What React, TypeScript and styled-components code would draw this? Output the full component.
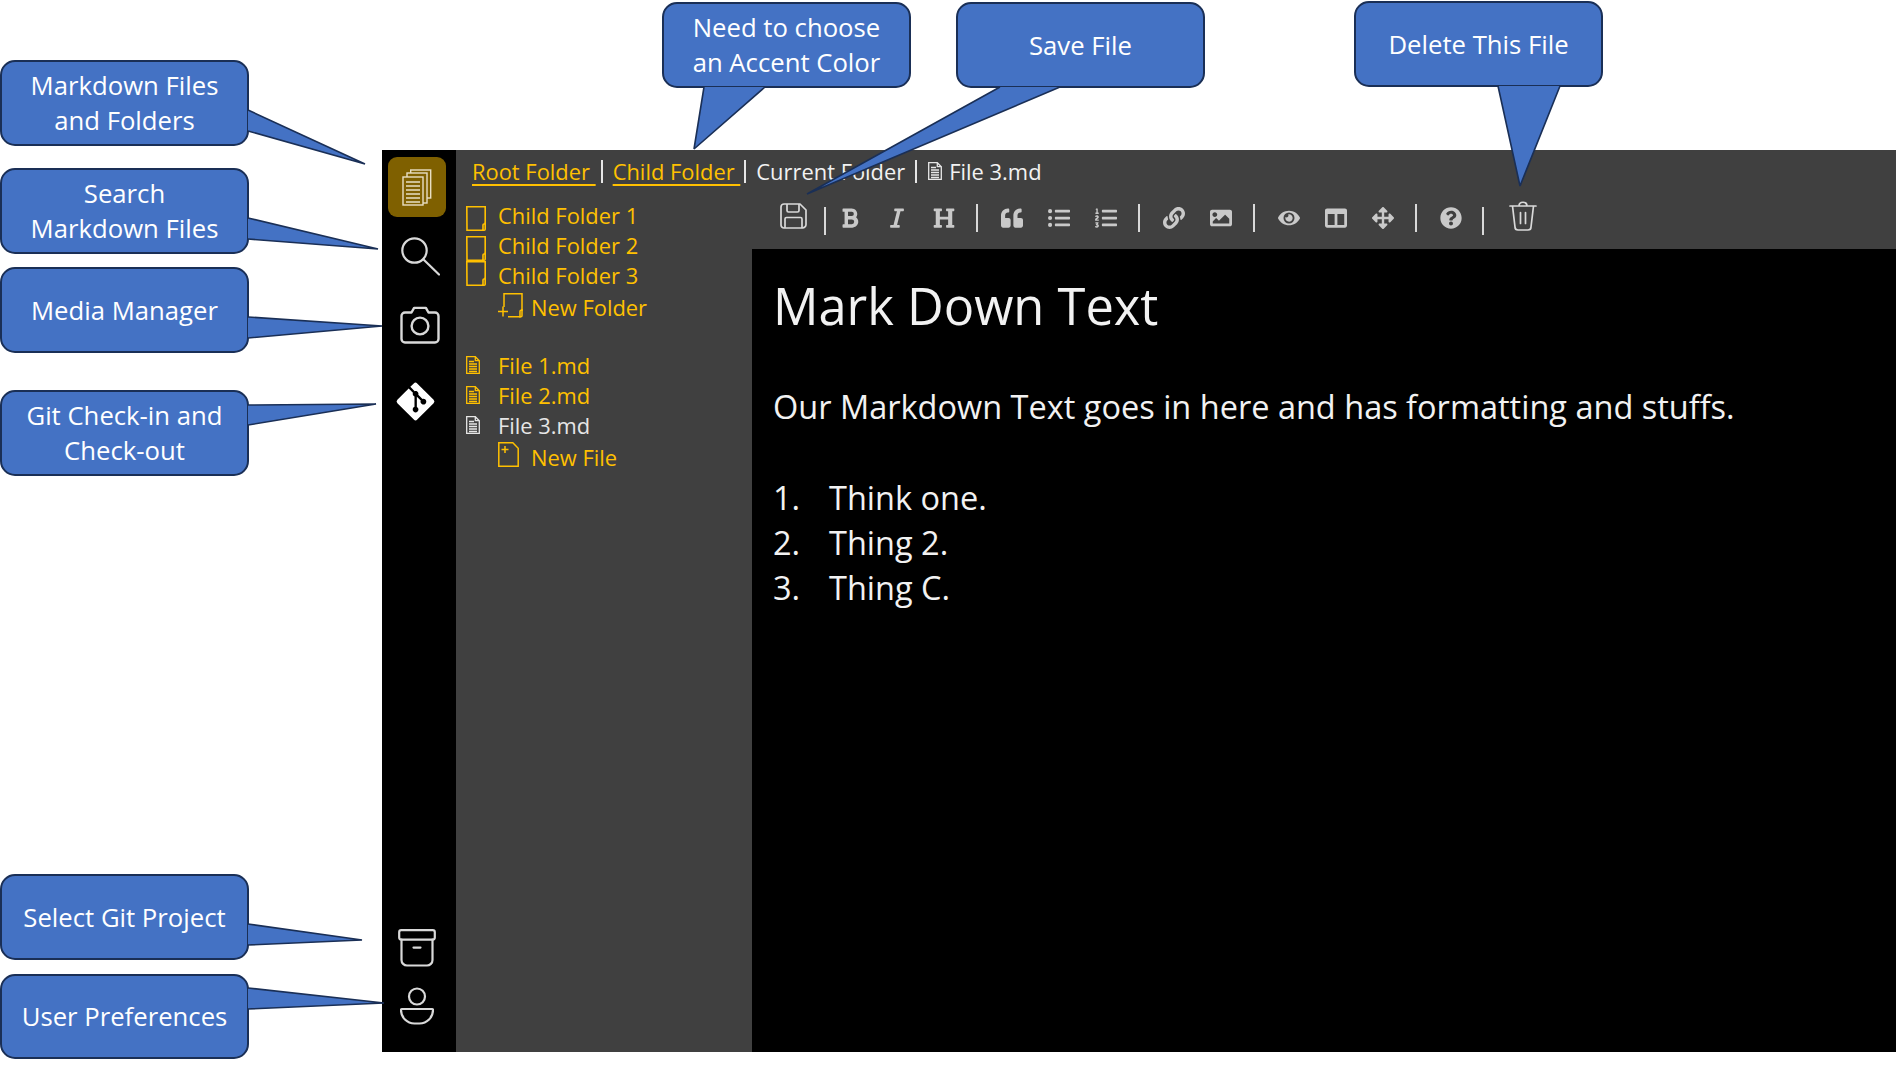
import React from "react";
import styled, { createGlobalStyle } from "styled-components";
import {
  FaArrowsAlt,
  FaBold,
  FaColumns,
  FaEye,
  FaGitAlt,
  FaHeading,
  FaImage,
  FaItalic,
  FaLink,
  FaListOl,
  FaListUl,
  FaQuestionCircle,
  FaQuoteLeft,
} from "react-icons/fa";

const ACCENT = "#ffc000";
const PANEL = "#404040";
const ICON_GREY = "#d9d9d9";

const GlobalStyle = createGlobalStyle`
  html, body {
    margin: 0;
    padding: 0;
    background: #fff;
    overflow: hidden;
  }
  body {
    font-family: "Open Sans", "Noto Sans", sans-serif;
  }
`;

const Page = styled.div`
  position: relative;
  width: 1896px;
  height: 1066px;
  box-sizing: border-box;
  padding: 150px 0 14px 382px;
`;

const Shell = styled.div`
  display: flex;
  height: 100%;
`;

/* left icon rail */
const Rail = styled.nav`
  width: 74px;
  flex: none;
  background: #000;
  display: flex;
  flex-direction: column;
  padding: 7px 0 17px;
  box-sizing: border-box;
`;

const RailSpacer = styled.div`
  flex: 1;
`;

const RailButton = styled.button<{ $h: number; $active?: boolean }>`
  width: 58px;
  height: ${(p) => p.$h}px;
  margin-left: 6px;
  padding: 0;
  border: 0;
  flex: none;
  border-radius: 9px;
  color: ${ICON_GREY};
  background: ${(p) => (p.$active ? "#7f6000" : "transparent")};
  display: flex;
  align-items: center;
  justify-content: center;
`;

const GitGlyph = styled(FaGitAlt)`
  width: 43px;
  height: 43px;
  color: #fff;
  margin-right: 3px;
`;

/* everything right of the rail */
const Main = styled.div`
  flex: 1;
  min-width: 0;
  background: ${PANEL};
  display: flex;
  flex-direction: column;
`;

const Crumbs = styled.div`
  height: 44px;
  flex: none;
  box-sizing: border-box;
  padding: 0 0 2px 16px;
  display: flex;
  align-items: center;
  font-size: 21.9px;
  color: #f2f2f2;
  white-space: pre;
`;

const CrumbLink = styled.a`
  color: ${ACCENT};
  text-decoration: underline;
  text-underline-offset: 4px;
  text-decoration-thickness: 2px;
`;

const CrumbBar = styled.span<{ $left: number; $right: number }>`
  width: 2px;
  height: 23px;
  background: #e6e6e6;
  margin: 0 ${(p) => p.$right}px 0 ${(p) => p.$left}px;
`;

const CrumbDoc = styled.span`
  display: inline-flex;
  margin-right: 7px;
  color: #e6e6e6;
`;

const Body = styled.div`
  flex: 1;
  min-height: 0;
  display: flex;
`;

/* file tree */
const Tree = styled.div`
  width: 296px;
  flex: none;
  box-sizing: border-box;
  padding: 6px 0 0 10px;
  font-size: 21.9px;
  color: ${ACCENT};
`;

const TreeRow = styled.div<{ $new?: boolean; $current?: boolean; $after?: number }>`
  height: 30px;
  display: flex;
  align-items: center;
  white-space: nowrap;
  color: ${(p) => (p.$current ? "#e6e6e6" : ACCENT)};
  padding-left: ${(p) => (p.$new ? 32 : 0)}px;
  margin-top: ${(p) => (p.$new ? 2 : 0)}px;
  margin-bottom: ${(p) => p.$after ?? 0}px;
`;

const TreeIcon = styled.span<{ $w: number; $nudge?: number }>`
  width: ${(p) => p.$w}px;
  flex: none;
  display: flex;
  transform: translateY(${(p) => p.$nudge ?? 0}px);
`;

/* editor column */
const Editor = styled.div`
  flex: 1;
  min-width: 0;
  display: flex;
  flex-direction: column;
`;

const Toolbar = styled.div`
  height: 55px;
  flex: none;
  box-sizing: border-box;
  display: flex;
  align-items: center;
  color: ${ICON_GREY};
  padding: 0 0 7px 28px;
`;

const ToolEnd = styled.span`
  display: flex;
  flex: none;
  transform: translateY(-2px);
`;

const ToolCell = styled.span`
  width: 47px;
  height: 24px;
  flex: none;
  display: flex;
  align-items: center;
  justify-content: center;
  font-size: 22px;
  color: #c9c9c9;
  filter: blur(0.4px);
`;

const ToolSep = styled.span<{ $left?: number; $right?: number; $down?: number }>`
  width: 2px;
  height: 28px;
  flex: none;
  background: #d9d9d9;
  margin: 0 ${(p) => p.$right ?? 10}px 0 ${(p) => p.$left ?? 9}px;
  transform: translateY(${(p) => p.$down ?? 0}px);
`;

const Content = styled.main`
  flex: 1;
  background: #000;
  color: #f2f2f2;
  padding: 25px 0 0 21px;
`;

const Title = styled.h1`
  margin: 0;
  font-size: 50.6px;
  font-weight: 400;
  line-height: 64px;
`;

const Paragraph = styled.p`
  margin: 47px 0 0;
  font-size: 32.5px;
  line-height: 44px;
`;

const Steps = styled.ol`
  list-style: none;
  margin: 46px 0 0;
  padding: 0;
  font-size: 32.5px;
  line-height: 45px;
`;

const Step = styled.li`
  display: flex;
`;

const StepNumber = styled.span`
  width: 56px;
  flex: none;
`;

/* annotation callouts laid over the mock */
const Callout = styled.div<{ $x: number; $y: number; $w: number; $h: number }>`
  position: absolute;
  left: ${(p) => p.$x}px;
  top: ${(p) => p.$y}px;
  width: ${(p) => p.$w}px;
  height: ${(p) => p.$h}px;
  box-sizing: border-box;
  border: 2px solid #1a2f56;
  border-radius: 15px;
  background: #4472c4;
  color: #fff;
  display: flex;
  align-items: center;
  justify-content: center;
  text-align: center;
  font-size: 25.7px;
  line-height: 35px;
`;

const TailLayer = styled.svg`
  position: absolute;
  left: 0;
  top: 0;
  pointer-events: none;
`;

const callouts = [
  { x: 0, y: 60, w: 249, h: 86, lines: ["Markdown Files", "and Folders"], tail: [[248, 110], [365, 164], [248, 131]] },
  { x: 0, y: 168, w: 249, h: 86, lines: ["Search", "Markdown Files"], tail: [[248, 218], [378, 249], [248, 239]] },
  { x: 0, y: 267, w: 249, h: 86, lines: ["Media Manager"], tail: [[248, 317], [382, 326], [248, 338]] },
  { x: 0, y: 390, w: 249, h: 86, lines: ["Git Check-in and", "Check-out"], tail: [[248, 405], [376, 404], [248, 425]] },
  { x: 0, y: 874, w: 249, h: 86, lines: ["Select Git Project"], tail: [[248, 924], [362, 940], [248, 945]] },
  { x: 0, y: 974, w: 249, h: 85, lines: ["User Preferences"], tail: [[248, 988], [384, 1003], [248, 1009]] },
  { x: 662, y: 2, w: 249, h: 86, lines: ["Need to choose", "an Accent Color"], tail: [[704, 87], [694, 149], [765, 87]] },
  { x: 956, y: 2, w: 249, h: 86, lines: ["Save File"], tail: [[1000, 87], [807, 194], [1060, 87]] },
  { x: 1354, y: 1, w: 249, h: 86, lines: ["Delete This File"], tail: [[1498, 86], [1520, 186], [1560, 86]] },
];

const Tails = () => (
  <TailLayer width={1896} height={1066} viewBox="0 0 1896 1066">
    {callouts.map((c) => {
      const pts = c.tail.map((p) => p.join(",")).join(" ");
      return (
        <g key={c.lines[0]}>
          <polygon points={pts} fill="#4472c4" />
          <polyline points={pts} fill="none" stroke="#1a2f56" strokeWidth={1.6} strokeLinejoin="bevel" />
        </g>
      );
    })}
  </TailLayer>
);

/* drawn icons */
const DocsIcon = () => (
  <svg width="30" height="37" viewBox="0 0 30 37" fill="none" stroke="#e8dfc4" strokeWidth="1.4">
    <rect x="8.7" y="1" width="20" height="28" fill="#7f6000" />
    <rect x="5" y="4" width="20" height="30" fill="#7f6000" />
    <rect x="1" y="8" width="20" height="28" fill="#7f6000" />
    <path d="M4 13h14M4 17h14M4 21h14M4 25h14M4 29h14M4 33h14" />
  </svg>
);

const SearchIcon = () => (
  <svg width="40" height="40" viewBox="0 0 40 40" fill="none" stroke={ICON_GREY} strokeWidth="2.2" style={{ transform: "translate(3px, 6px)" }}>
    <circle cx="14.5" cy="14.5" r="12.2" />
    <path d="M23.5 23.5 39 38.5" strokeLinecap="round" />
  </svg>
);

const CameraIcon = () => (
  <svg width="40" height="38" viewBox="0 0 40 38" fill="none" stroke={ICON_GREY} strokeWidth="2.4" strokeLinejoin="round" style={{ transform: "translate(3px, 0)" }}>
    <path d="M5 6.5h6.5l2.6-4.6h11.8l2.6 4.6H35a3.5 3.5 0 0 1 3.5 3.5v23a3.5 3.5 0 0 1-3.5 3.5H5A3.5 3.5 0 0 1 1.5 33V10A3.5 3.5 0 0 1 5 6.5Z" />
    <circle cx="20" cy="20" r="8.4" />
  </svg>
);

const ArchiveIcon = () => (
  <svg width="38" height="38" viewBox="0 0 38 38" fill="none" stroke={ICON_GREY} strokeWidth="2.2" strokeLinecap="round" strokeLinejoin="round">
    <rect x="1.2" y="1.2" width="35.6" height="9.4" rx="2" />
    <path d="M3.5 10.6V31a5.5 5.5 0 0 0 5.5 5.5h20a5.5 5.5 0 0 0 5.5-5.5V10.6M15.5 18.6h7" />
  </svg>
);

const PersonIcon = () => (
  <svg width="34" height="38" viewBox="0 0 34 38" fill="none" stroke={ICON_GREY} strokeWidth="2.2">
    <circle cx="17" cy="9.5" r="8" />
    <path d="M2 22h30a1 1 0 0 1 1 1c0 7.500-6 13.500-13.500 13.500h-5C7 36.500 1 30.500 1 23a1 1 0 0 1 1-1Z" />
  </svg>
);

const SaveIcon = () => (
  <svg width="27" height="26" viewBox="0 0 27 26" fill="none" stroke={ICON_GREY} strokeWidth="1.7" strokeLinejoin="round">
    <path d="M4 1h16l6 6v14.500a3.500 3.500 0 0 1-3.500 3.500h-18.500a3 3 0 0 1-3-3V4a3 3 0 0 1 3-3Z" />
    <path d="M7 1v6.500a1.500 1.500 0 0 0 1.500 1.500h9a1.500 1.500 0 0 0 1.500-1.500V1M5 25v-9a1.500 1.500 0 0 1 1.500-1.500h14a1.500 1.500 0 0 1 1.500 1.500v9" />
  </svg>
);

const TrashIcon = () => (
  <svg width="28" height="30" viewBox="0 0 28 30" fill="none" stroke={ICON_GREY} strokeWidth="1.7" strokeLinecap="round" strokeLinejoin="round">
    <path d="M1 5h26M10 5c0-5 8-5 8 0M3.500 5l2.500 21a3 3 0 0 0 3 3h10a3 3 0 0 0 3-3l2.500-21M11.500 11.500v11M16.500 11.500v11" />
  </svg>
);

const DocIcon: React.FC<{ w?: number; h?: number }> = ({ w = 14, h = 18 }) => (
  <svg width={w} height={h} viewBox="0 0 14 18" fill="none" stroke="currentColor" strokeWidth="1.300">
    <path d="M.7.7h8.600l4 4v12.600H.7Z" />
    <path d="M9.300.7v4h4M3 5.500h5M3 8h8M3 10.500h8M3 13h8M3 15.500h8" />
  </svg>
);

const FolderIcon = () => (
  <svg width="21" height="25" viewBox="0 0 21 25" fill="none" stroke={ACCENT} strokeWidth="1.600">
    <path d="M.8.8h18.400v17.200h-1.200a1 1 0 0 0-1 1v5.200h-16Z" />
    <path d="M19.200 16.500v6.700a1 1 0 0 1-1 1h-2.200" />
  </svg>
);

const NewFolderIcon = () => (
  <svg width="25" height="25" viewBox="0 0 25 25" fill="none" stroke={ACCENT} strokeWidth="1.500">
    <path d="M6 14V.8h18v16.500h-1a1 1 0 0 0-1 1v5.500H10" />
    <path d="M24 16v6.700a1 1 0 0 1-1 1h-2M0 18.500h10M5 13.500v10" />
  </svg>
);

const NewFileIcon = () => (
  <svg width="21" height="25" viewBox="0 0 21 25" fill="none" stroke={ACCENT} strokeWidth="1.500">
    <path d="M.8.8h14l5.400 5.400v18H.8Z" />
    <path d="M3.500 7.500h7M7 4v7" />
  </svg>
);

const folders = ["Child Folder 1", "Child Folder 2", "Child Folder 3"];
const files = ["File 1.md", "File 2.md", "File 3.md"];
const steps = ["Think one.", "Thing 2.", "Thing C."];

export default function App() {
  return (
    <Page>
      <GlobalStyle />
      <Shell>
        <Rail>
          <RailButton $h={60} $active>
            <DocsIcon />
          </RailButton>
          <RailButton $h={66}>
            <SearchIcon />
          </RailButton>
          <RailButton $h={84}>
            <CameraIcon />
          </RailButton>
          <RailButton $h={68}>
            <GitGlyph />
          </RailButton>
          <RailSpacer />
          <RailButton $h={58}>
            <ArchiveIcon />
          </RailButton>
          <RailButton $h={58}>
            <PersonIcon />
          </RailButton>
        </Rail>
        <Main>
          <Crumbs>
            <CrumbLink>Root Folder </CrumbLink>
            <CrumbBar $left={5} $right={10} />
            <CrumbLink>Child Folder </CrumbLink>
            <CrumbBar $left={4} $right={10} />
            <span>Current Folder</span>
            <CrumbBar $left={10} $right={11} />
            <CrumbDoc>
              <DocIcon w={14} h={18} />
            </CrumbDoc>
            <span>File 3.md</span>
          </Crumbs>
          <Body>
            <Tree>
              {folders.map((name, i) => (
                <TreeRow key={name}>
                  <TreeIcon $w={32} $nudge={i === 2 ? -2 : 3}>
                    <FolderIcon />
                  </TreeIcon>
                  {name}
                </TreeRow>
              ))}
              <TreeRow $new $after={28}>
                <TreeIcon $w={33} $nudge={-2}>
                  <NewFolderIcon />
                </TreeIcon>
                New Folder
              </TreeRow>
              {files.map((name, i) => (
                <TreeRow key={name} $current={i === 2}>
                  <TreeIcon $w={32}>
                    <DocIcon />
                  </TreeIcon>
                  {name}
                </TreeRow>
              ))}
              <TreeRow $new>
                <TreeIcon $w={33} $nudge={-3}>
                  <NewFileIcon />
                </TreeIcon>
                New File
              </TreeRow>
            </Tree>
            <Editor>
              <Toolbar>
                <ToolEnd>
                  <SaveIcon />
                </ToolEnd>
                <ToolSep $left={17} $right={0} $down={3} />
                <ToolCell><FaBold /></ToolCell>
                <ToolCell><FaItalic /></ToolCell>
                <ToolCell><FaHeading /></ToolCell>
                <ToolSep />
                <ToolCell><FaQuoteLeft /></ToolCell>
                <ToolCell><FaListUl /></ToolCell>
                <ToolCell><FaListOl /></ToolCell>
                <ToolSep />
                <ToolCell><FaLink /></ToolCell>
                <ToolCell><FaImage /></ToolCell>
                <ToolSep />
                <ToolCell><FaEye /></ToolCell>
                <ToolCell><FaColumns /></ToolCell>
                <ToolCell><FaArrowsAlt /></ToolCell>
                <ToolSep />
                <ToolCell><FaQuestionCircle /></ToolCell>
                <ToolSep $left={8} $right={25} $down={3} />
                <ToolEnd>
                  <TrashIcon />
                </ToolEnd>
              </Toolbar>
              <Content>
                <Title>Mark Down Text</Title>
                <Paragraph>Our Markdown Text goes in here and has formatting and stuffs.</Paragraph>
                <Steps>
                  {steps.map((s, i) => (
                    <Step key={s}>
                      <StepNumber>{i + 1}.</StepNumber>
                      {s}
                    </Step>
                  ))}
                </Steps>
              </Content>
            </Editor>
          </Body>
        </Main>
      </Shell>
      {callouts.map((c) => (
        <Callout key={c.lines[0]} $x={c.x} $y={c.y} $w={c.w} $h={c.h}>
          <div>
            {c.lines.map((line) => (
              <div key={line}>{line}</div>
            ))}
          </div>
        </Callout>
      ))}
      <Tails />
    </Page>
  );
}
